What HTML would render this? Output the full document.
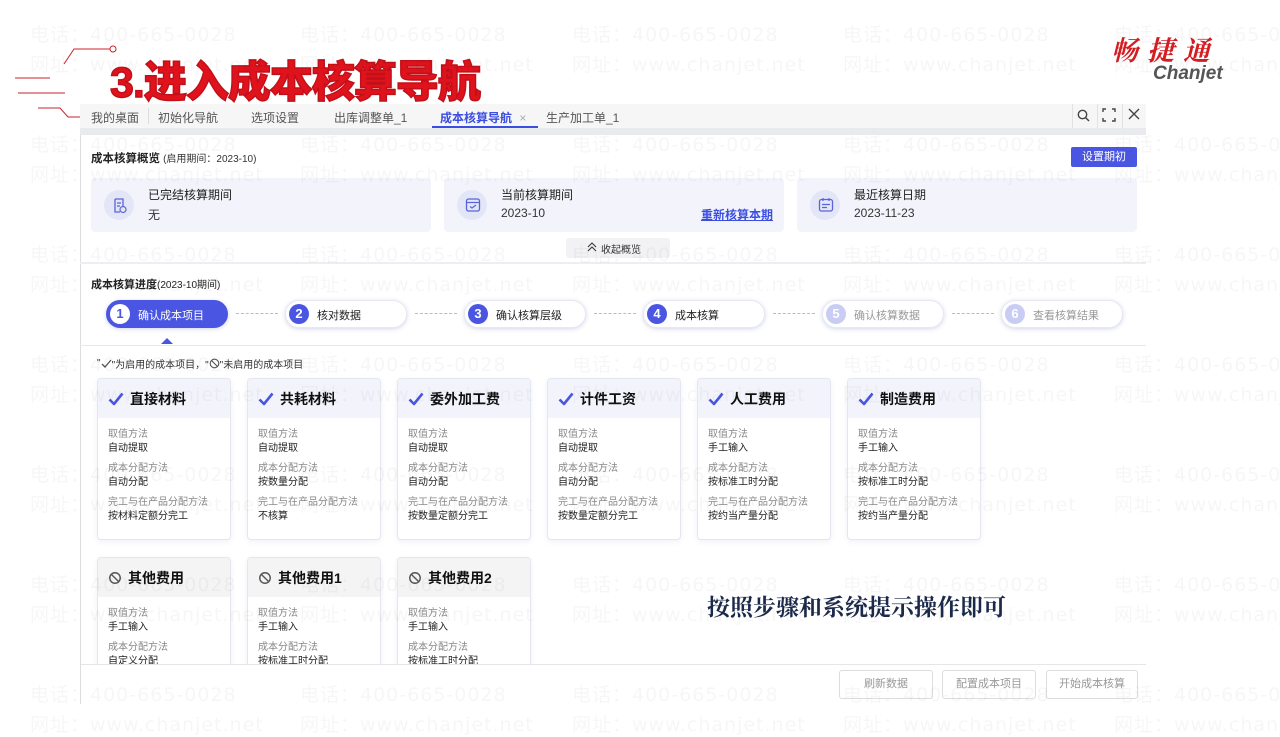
<!DOCTYPE html>
<html><head><meta charset="utf-8"><style>
*{margin:0;padding:0;box-sizing:border-box}
body{width:1280px;height:720px;overflow:hidden;background:#fff;position:relative;font-family:"Liberation Sans","Noto Sans CJK SC",sans-serif;color:#222}
.a{position:absolute}
.wm{position:absolute;font-size:19px;color:rgba(0,0,0,0.035);white-space:nowrap;letter-spacing:1px;z-index:50;pointer-events:none;font-family:"DejaVu Sans","Noto Sans CJK SC",sans-serif}
.tab{position:absolute;top:109px;font-size:12px;color:#555}
.ov{position:absolute;top:178px;height:54px;width:340px;background:#f3f4fb;border-radius:4px}
.ov .ic{position:absolute;left:13px;top:12px;width:30px;height:30px;border-radius:50%;background:#e3e6f7}
.ov .t{position:absolute;left:57px;top:8px;font-size:12px;color:#222}
.ov .v{position:absolute;left:57px;top:28px;font-size:12px;color:#333}
.st{position:absolute;top:300px;width:122px;height:28px;border-radius:14px;background:#fff;box-shadow:0 1px 4px rgba(80,90,180,.25);border:1px solid #e6e8f3}
.st .n{position:absolute;left:3px;top:3px;width:20px;height:20px;border-radius:50%;background:#4a56e2;color:#fff;font-size:13px;font-weight:bold;text-align:center;line-height:20px}
.st .l{position:absolute;left:31px;top:6px;font-size:11px;color:#222}
.st.dis .n{background:#c9cdf4}.st.dis .l{color:#999}
.dots{position:absolute;top:313px;width:42px;border-top:1px dashed #bbb}
.cd{position:absolute;width:134px;border:1px solid #e4e6f0;border-radius:4px;background:#fff;box-shadow:0 2px 6px rgba(80,90,160,.08);overflow:hidden}
.cd .h{background:#f3f4fb;font-size:14px;font-weight:bold;padding:0 0 0 10px;color:#111;display:flex;align-items:center;height:39px}
.cd .h svg{margin-right:6px}
.cd .h.g{background:#f4f4f5}
.cd .k{font-size:10px;color:#888;margin:11px 0 0 10px;line-height:12px}
.cd .vv{font-size:10px;color:#222;margin:2px 0 0 10px;line-height:12px}
.cd .k2{font-size:10px;color:#888;margin:8px 0 0 10px;line-height:12px}
.btn{position:absolute;top:670px;height:29px;border:1px solid #ddd;border-radius:3px;font-size:11px;color:#999;text-align:center;line-height:27px;background:#fff}
</style></head><body>

<svg class="a" style="left:0;top:40px" width="150" height="80"><g stroke="#c8222a" fill="none" stroke-width="1"><path d="M64 24 L74 9 L110 9"/><circle cx="113" cy="9" r="3"/><path d="M15 38 L50 38"/><path d="M18 53 L65 53"/><path d="M38 68 L60 68 L68 77 L80 77"/></g></svg>
<div class="a" style="left:110px;top:57px;font-size:43px;font-weight:900;color:#e0121b;letter-spacing:-1px;-webkit-text-stroke:1.4px #c0101a;line-height:52px;font-family:'Liberation Sans','Noto Sans CJK SC',sans-serif">3.进入成本核算导航</div>

<div class="a" style="left:1111px;top:31px;font-size:27px;font-style:italic;font-weight:bold;color:#d41d23;letter-spacing:9px;font-family:'Noto Serif CJK SC',serif;line-height:36px">畅捷通</div>
<div class="a" style="left:1153px;top:63px;font-size:19px;font-style:italic;font-weight:bold;color:#555">Chanjet</div>

<div class="a" style="left:80px;top:104px;width:1066px;height:600px;border-left:1px solid #ddd"></div>
<div class="a" style="left:80px;top:104px;width:1066px;height:25px;background:#f6f6f7"></div>
<div class="tab" style="left:91px">我的桌面</div>
<div class="a" style="left:148px;top:108px;height:16px;border-left:1px solid #ddd"></div>
<div class="tab" style="left:158px">初始化导航</div>
<div class="tab" style="left:251px">选项设置</div>
<div class="tab" style="left:334px">出库调整单_1</div>
<div class="tab" style="left:440px;color:#3b4ee0;font-weight:bold">成本核算导航 <span style="color:#aaa;font-weight:normal;margin-left:4px">×</span></div>
<div class="a" style="left:432px;top:126px;width:106px;height:2px;background:#3b4ee0"></div>
<div class="tab" style="left:546px">生产加工单_1</div>
<div class="a" style="left:1072px;top:104px;height:24px;border-left:1px solid #e2e2e2"></div>
<div class="a" style="left:1097px;top:104px;height:24px;border-left:1px solid #e2e2e2"></div>
<div class="a" style="left:1122px;top:104px;height:24px;border-left:1px solid #e2e2e2"></div>
<svg class="a" style="left:1076px;top:108px" width="16" height="16"><circle cx="6.5" cy="6.5" r="4.2" stroke="#444" stroke-width="1.4" fill="none"/><path d="M9.6 9.6L13 13" stroke="#444" stroke-width="1.5"/></svg>
<svg class="a" style="left:1102px;top:108px" width="14" height="14"><path d="M1 4V1H4M10 1H13V4M13 10V13H10M4 13H1V10" stroke="#444" stroke-width="1.4" fill="none"/></svg>
<svg class="a" style="left:1128px;top:108px" width="12" height="12"><path d="M1 1L11 11M11 1L1 11" stroke="#444" stroke-width="1.4"/></svg>
<div class="a" style="left:80px;top:128px;width:1066px;height:7px;background:#e9eaee"></div>

<div class="a" style="left:91px;top:150px;font-size:11px;"><b style="font-size:11.5px">成本核算概览</b> <span style="font-size:10px;color:#333">(启用期间：2023-10)</span></div>
<div class="a" style="left:1071px;top:147px;width:66px;height:20px;background:#4a56e2;border-radius:2px;color:#fff;font-size:11px;text-align:center;line-height:20px">设置期初</div>

<div class="ov" style="left:91px"><div class="ic"></div><svg class="a" style="left:22px;top:20px" width="14" height="16"><path d="M2 1H10V8M2 1V14H7" stroke="#5a64d8" stroke-width="1.3" fill="none"/><path d="M4 5H8M4 8H7" stroke="#5a64d8" stroke-width="1.2"/><circle cx="10" cy="11.5" r="3" stroke="#5a64d8" stroke-width="1.2" fill="none"/></svg><div class="t">已完结核算期间</div><div class="v">无</div></div>
<div class="ov" style="left:444px"><div class="ic"></div><svg class="a" style="left:21px;top:19px" width="16" height="16"><rect x="1.5" y="2" width="13" height="12" rx="2" stroke="#5a64d8" stroke-width="1.3" fill="none"/><path d="M1.5 5.5H14.5M5 9.5L7 11L11 8" stroke="#5a64d8" stroke-width="1.2" fill="none"/></svg><div class="t">当前核算期间</div><div class="v">2023-10</div><div class="a" style="left:257px;top:28px;font-size:12px;color:#3b4ee0;font-weight:bold;text-decoration:underline">重新核算本期</div></div>
<div class="ov" style="left:797px"><div class="ic"></div><svg class="a" style="left:21px;top:19px" width="16" height="16"><rect x="1.5" y="2.5" width="13" height="11.5" rx="2" stroke="#5a64d8" stroke-width="1.3" fill="none"/><path d="M5 1V4M11 1V4M4 7.5H12M4 10.5H9" stroke="#5a64d8" stroke-width="1.2"/></svg><div class="t">最近核算日期</div><div class="v">2023-11-23</div></div>

<div class="a" style="left:566px;top:238px;width:104px;height:20px;background:#f2f2f4;border-radius:3px"></div>
<svg class="a" style="left:587px;top:242px" width="10" height="10"><path d="M1 5L5 1L9 5M1 9L5 5L9 9" stroke="#333" fill="none" stroke-width="1"/></svg>
<div class="a" style="left:601px;top:241px;font-size:10px;color:#333">收起概览</div>
<div class="a" style="left:80px;top:262px;width:1066px;height:2px;background:#eceef3"></div>

<div class="a" style="left:91px;top:276px;font-size:11px"><b>成本核算进度</b><span style="font-size:10px">(2023-10期间)</span></div>

<div class="st" style="left:106px;background:#4a56e2;border-color:#4a56e2"><div class="n" style="background:#fff;color:#4a56e2">1</div><div class="l" style="color:#fff">确认成本项目</div></div>
<div class="dots" style="left:236px"></div>
<div class="st" style="left:285px"><div class="n">2</div><div class="l">核对数据</div></div>
<div class="dots" style="left:415px"></div>
<div class="st" style="left:464px"><div class="n">3</div><div class="l">确认核算层级</div></div>
<div class="dots" style="left:594px"></div>
<div class="st" style="left:643px"><div class="n">4</div><div class="l">成本核算</div></div>
<div class="dots" style="left:773px"></div>
<div class="st dis" style="left:822px"><div class="n">5</div><div class="l">确认核算数据</div></div>
<div class="dots" style="left:952px"></div>
<div class="st dis" style="left:1001px"><div class="n">6</div><div class="l">查看核算结果</div></div>
<div class="a" style="left:161px;top:338px;width:0;height:0;border-left:6px solid transparent;border-right:6px solid transparent;border-bottom:6px solid #4a56e2"></div>
<div class="a" style="left:80px;top:345px;width:1066px;height:1px;background:#e6e8ef"></div>

<div class="a" style="left:97px;top:356px;font-size:10px;color:#333;display:flex;align-items:center">"<svg width="11" height="10"><path d="M1 5L4 8L10 1" stroke="#555" fill="none" stroke-width="1.3"/></svg>"为启用的成本项目，"<svg width="11" height="11"><circle cx="5.5" cy="5.5" r="4.3" stroke="#555" fill="none" stroke-width="1.1"/><path d="M2.5 2.5L8.5 8.5" stroke="#555" stroke-width="1.1"/></svg>"未启用的成本项目</div>

<svg width="0" height="0" style="position:absolute"><defs>
<symbol id="ck" viewBox="0 0 16 16"><path d="M1.5 8.5L6 13L14.5 2.5" stroke="#4a56e2" stroke-width="2.6" fill="none" stroke-linejoin="round"/></symbol>
<symbol id="bn" viewBox="0 0 16 16"><circle cx="8" cy="8" r="6" stroke="#555" stroke-width="1.6" fill="none"/><path d="M3.8 3.8L12.2 12.2" stroke="#555" stroke-width="1.6"/></symbol>
</defs></svg>

<div class="cd" style="left:97px;top:378px;height:162px"><div class="h"><svg width="16" height="16"><use href="#ck"/></svg>直接材料</div><div class="k">取值方法</div><div class="vv">自动提取</div><div class="k2">成本分配方法</div><div class="vv">自动分配</div><div class="k2">完工与在产品分配方法</div><div class="vv">按材料定额分完工</div></div>
<div class="cd" style="left:247px;top:378px;height:162px"><div class="h"><svg width="16" height="16"><use href="#ck"/></svg>共耗材料</div><div class="k">取值方法</div><div class="vv">自动提取</div><div class="k2">成本分配方法</div><div class="vv">按数量分配</div><div class="k2">完工与在产品分配方法</div><div class="vv">不核算</div></div>
<div class="cd" style="left:397px;top:378px;height:162px"><div class="h"><svg width="16" height="16"><use href="#ck"/></svg>委外加工费</div><div class="k">取值方法</div><div class="vv">自动提取</div><div class="k2">成本分配方法</div><div class="vv">自动分配</div><div class="k2">完工与在产品分配方法</div><div class="vv">按数量定额分完工</div></div>
<div class="cd" style="left:547px;top:378px;height:162px"><div class="h"><svg width="16" height="16"><use href="#ck"/></svg>计件工资</div><div class="k">取值方法</div><div class="vv">自动提取</div><div class="k2">成本分配方法</div><div class="vv">自动分配</div><div class="k2">完工与在产品分配方法</div><div class="vv">按数量定额分完工</div></div>
<div class="cd" style="left:697px;top:378px;height:162px"><div class="h"><svg width="16" height="16"><use href="#ck"/></svg>人工费用</div><div class="k">取值方法</div><div class="vv">手工输入</div><div class="k2">成本分配方法</div><div class="vv">按标准工时分配</div><div class="k2">完工与在产品分配方法</div><div class="vv">按约当产量分配</div></div>
<div class="cd" style="left:847px;top:378px;height:162px"><div class="h"><svg width="16" height="16"><use href="#ck"/></svg>制造费用</div><div class="k">取值方法</div><div class="vv">手工输入</div><div class="k2">成本分配方法</div><div class="vv">按标准工时分配</div><div class="k2">完工与在产品分配方法</div><div class="vv">按约当产量分配</div></div>

<div class="cd" style="left:97px;top:557px;height:130px"><div class="h g"><svg width="14" height="14"><use href="#bn"/></svg>其他费用</div><div class="k">取值方法</div><div class="vv">手工输入</div><div class="k2">成本分配方法</div><div class="vv">自定义分配</div></div>
<div class="cd" style="left:247px;top:557px;height:130px"><div class="h g"><svg width="14" height="14"><use href="#bn"/></svg>其他费用1</div><div class="k">取值方法</div><div class="vv">手工输入</div><div class="k2">成本分配方法</div><div class="vv">按标准工时分配</div></div>
<div class="cd" style="left:397px;top:557px;height:130px"><div class="h g"><svg width="14" height="14"><use href="#bn"/></svg>其他费用2</div><div class="k">取值方法</div><div class="vv">手工输入</div><div class="k2">成本分配方法</div><div class="vv">按标准工时分配</div></div>

<div class="a" style="left:707px;top:589px;font-size:23px;color:#1b2a4a;font-family:'Liberation Serif','Noto Serif CJK SC',serif;font-weight:bold">按照步骤和系统提示操作即可</div>

<div class="a" style="left:81px;top:664px;width:1065px;height:56px;background:#fff;border-top:1px solid #e6e6e6"></div>
<div class="btn" style="left:839px;width:94px">刷新数据</div>
<div class="btn" style="left:942px;width:94px">配置成本项目</div>
<div class="btn" style="left:1046px;width:92px">开始成本核算</div>

<div class="wm" style="left:30px;top:20px">电话：400-665-0028</div><div class="wm" style="left:30px;top:50px">网址：www.chanjet.net</div>
<div class="wm" style="left:300px;top:20px">电话：400-665-0028</div><div class="wm" style="left:300px;top:50px">网址：www.chanjet.net</div>
<div class="wm" style="left:572px;top:20px">电话：400-665-0028</div><div class="wm" style="left:572px;top:50px">网址：www.chanjet.net</div>
<div class="wm" style="left:843px;top:20px">电话：400-665-0028</div><div class="wm" style="left:843px;top:50px">网址：www.chanjet.net</div>
<div class="wm" style="left:1114px;top:20px">电话：400-665-0028</div><div class="wm" style="left:1114px;top:50px">网址：www.chanjet.net</div>
<div class="wm" style="left:30px;top:130px">电话：400-665-0028</div><div class="wm" style="left:30px;top:160px">网址：www.chanjet.net</div>
<div class="wm" style="left:300px;top:130px">电话：400-665-0028</div><div class="wm" style="left:300px;top:160px">网址：www.chanjet.net</div>
<div class="wm" style="left:572px;top:130px">电话：400-665-0028</div><div class="wm" style="left:572px;top:160px">网址：www.chanjet.net</div>
<div class="wm" style="left:843px;top:130px">电话：400-665-0028</div><div class="wm" style="left:843px;top:160px">网址：www.chanjet.net</div>
<div class="wm" style="left:1114px;top:130px">电话：400-665-0028</div><div class="wm" style="left:1114px;top:160px">网址：www.chanjet.net</div>
<div class="wm" style="left:30px;top:240px">电话：400-665-0028</div><div class="wm" style="left:30px;top:270px">网址：www.chanjet.net</div>
<div class="wm" style="left:300px;top:240px">电话：400-665-0028</div><div class="wm" style="left:300px;top:270px">网址：www.chanjet.net</div>
<div class="wm" style="left:572px;top:240px">电话：400-665-0028</div><div class="wm" style="left:572px;top:270px">网址：www.chanjet.net</div>
<div class="wm" style="left:843px;top:240px">电话：400-665-0028</div><div class="wm" style="left:843px;top:270px">网址：www.chanjet.net</div>
<div class="wm" style="left:1114px;top:240px">电话：400-665-0028</div><div class="wm" style="left:1114px;top:270px">网址：www.chanjet.net</div>
<div class="wm" style="left:30px;top:350px">电话：400-665-0028</div><div class="wm" style="left:30px;top:380px">网址：www.chanjet.net</div>
<div class="wm" style="left:300px;top:350px">电话：400-665-0028</div><div class="wm" style="left:300px;top:380px">网址：www.chanjet.net</div>
<div class="wm" style="left:572px;top:350px">电话：400-665-0028</div><div class="wm" style="left:572px;top:380px">网址：www.chanjet.net</div>
<div class="wm" style="left:843px;top:350px">电话：400-665-0028</div><div class="wm" style="left:843px;top:380px">网址：www.chanjet.net</div>
<div class="wm" style="left:1114px;top:350px">电话：400-665-0028</div><div class="wm" style="left:1114px;top:380px">网址：www.chanjet.net</div>
<div class="wm" style="left:30px;top:460px">电话：400-665-0028</div><div class="wm" style="left:30px;top:490px">网址：www.chanjet.net</div>
<div class="wm" style="left:300px;top:460px">电话：400-665-0028</div><div class="wm" style="left:300px;top:490px">网址：www.chanjet.net</div>
<div class="wm" style="left:572px;top:460px">电话：400-665-0028</div><div class="wm" style="left:572px;top:490px">网址：www.chanjet.net</div>
<div class="wm" style="left:843px;top:460px">电话：400-665-0028</div><div class="wm" style="left:843px;top:490px">网址：www.chanjet.net</div>
<div class="wm" style="left:1114px;top:460px">电话：400-665-0028</div><div class="wm" style="left:1114px;top:490px">网址：www.chanjet.net</div>
<div class="wm" style="left:30px;top:570px">电话：400-665-0028</div><div class="wm" style="left:30px;top:600px">网址：www.chanjet.net</div>
<div class="wm" style="left:300px;top:570px">电话：400-665-0028</div><div class="wm" style="left:300px;top:600px">网址：www.chanjet.net</div>
<div class="wm" style="left:572px;top:570px">电话：400-665-0028</div><div class="wm" style="left:572px;top:600px">网址：www.chanjet.net</div>
<div class="wm" style="left:843px;top:570px">电话：400-665-0028</div><div class="wm" style="left:843px;top:600px">网址：www.chanjet.net</div>
<div class="wm" style="left:1114px;top:570px">电话：400-665-0028</div><div class="wm" style="left:1114px;top:600px">网址：www.chanjet.net</div>
<div class="wm" style="left:30px;top:680px">电话：400-665-0028</div><div class="wm" style="left:30px;top:710px">网址：www.chanjet.net</div>
<div class="wm" style="left:300px;top:680px">电话：400-665-0028</div><div class="wm" style="left:300px;top:710px">网址：www.chanjet.net</div>
<div class="wm" style="left:572px;top:680px">电话：400-665-0028</div><div class="wm" style="left:572px;top:710px">网址：www.chanjet.net</div>
<div class="wm" style="left:843px;top:680px">电话：400-665-0028</div><div class="wm" style="left:843px;top:710px">网址：www.chanjet.net</div>
<div class="wm" style="left:1114px;top:680px">电话：400-665-0028</div><div class="wm" style="left:1114px;top:710px">网址：www.chanjet.net</div>
</body></html>
